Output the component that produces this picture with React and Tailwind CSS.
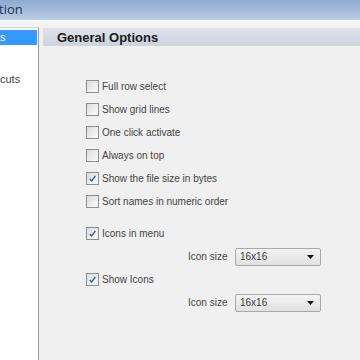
import React from "react";

function CheckBox({ checked }) {
  return (
    <span className="w-[13px] h-[13px] border border-[#8f8f8f] bg-gradient-to-br from-[#dcdcdc] to-[#fbfbfb] flex items-center justify-center shrink-0">
      {checked && (
        <svg width="9" height="9" viewBox="0 0 9 9">
          <path d="M1.8 4.9 L3.7 6.9 L7.4 1.8" fill="none" stroke="#41589a" strokeWidth="1.4" />
        </svg>
      )}
    </span>
  );
}

function Option({ label, checked, className = "" }) {
  return (
    <div className={`flex items-center gap-[3px] h-[23px] ${className}`}>
      <CheckBox checked={checked} />
      <span>{label}</span>
    </div>
  );
}

function SizeSelect() {
  return (
    <div className="flex items-center h-[23px] pl-[102px]">
      <span className="w-[47px]">Icon size</span>
      <div className="w-[86px] h-[18px] border border-[#a9a9a9] rounded-[2px] bg-gradient-to-b from-[#f4f4f4] to-[#e0e0e0] flex items-center justify-between pl-[4px] pr-[6px]">
        <span className="text-[#3a3a3a]">16x16</span>
        <svg width="7" height="4" viewBox="0 0 7 4">
          <path d="M0 0 H7 L3.5 4 Z" fill="#111" />
        </svg>
      </div>
    </div>
  );
}

export default function App() {
  const options = [
    { label: "Full row select", checked: false },
    { label: "Show grid lines", checked: false },
    { label: "One click activate", checked: false },
    { label: "Always on top", checked: false },
    { label: "Show the file size in bytes", checked: true },
    { label: "Sort names in numeric order", checked: false },
  ];

  return (
    <div className="w-[360px] h-[360px] overflow-hidden flex flex-col bg-[#f0f0f0] text-[10px] text-[#444]" style={{ fontFamily: "'Liberation Sans', Arial, sans-serif" }}>
      {/* title bar */}
      <div className="h-[20px] shrink-0 bg-gradient-to-b from-[#8eaad0] to-[#b9cde6] flex items-center">
        <span className="text-[13px] text-[#1f3350] -ml-[1px]" style={{ fontFamily: "'Open Sans', sans-serif" }}>tion</span>
      </div>
      <div className="h-[7px] shrink-0 bg-[#f3f3f3] border-t border-[#fdfdfd]" />

      <div className="flex flex-1 min-h-0">
        {/* left tree */}
        <div className="w-[39px] shrink-0 bg-white border-r border-[#9c9c9c] border-t border-t-[#d8d8d8] pt-[2px] text-[11px]">
          <div className="w-[37px] h-[15px] bg-[#3399ff] text-white flex items-center">s</div>
          <div className="h-[27px]" />
          <div className="h-[14px] flex items-center">cuts</div>
        </div>

        {/* right panel */}
        <div className="flex-1 pl-[4px] flex flex-col">
          <div className="h-[18px] mt-[1px] bg-gradient-to-b from-[#dfe4ea] to-[#cbd3dc] flex items-center pl-[14px]">
            <span className="text-[13px] font-bold text-[#1b1b1b] pt-[1px]">General Options</span>
          </div>

          <div className="pl-[43px] pt-[29px] flex flex-col">
            {options.map((o) => (
              <Option key={o.label} label={o.label} checked={o.checked} />
            ))}
            <Option label="Icons in menu" checked className="mt-[9px]" />
            <SizeSelect />
            <Option label="Show Icons" checked />
            <SizeSelect />
          </div>
        </div>
      </div>
    </div>
  );
}
